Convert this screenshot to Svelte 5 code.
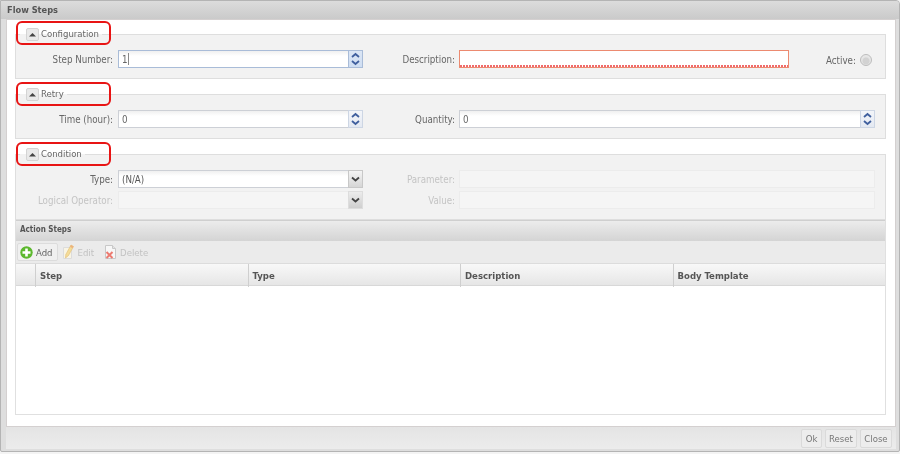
<script>
  const columns = ['Step', 'Type', 'Description', 'Body Template'];
</script>

{#snippet chevrons()}
  <span class="spin">
    <svg width="15" height="18" viewBox="0 0 15 18" aria-hidden="true">
      <path d="M4 7 7.500 4 11 7" fill="none" stroke="#3f5f9e" stroke-width="1.800"/>
      <path d="M4 11 7.500 14 11 11" fill="none" stroke="#3f5f9e" stroke-width="1.800"/>
    </svg>
  </span>
{/snippet}

{#snippet comboArrow(off)}
  <span class="arrow" class:off>
    <svg width="15" height="18" viewBox="0 0 15 18" aria-hidden="true">
      <path d="M4 7.500 7.500 10.500 11 7.500" fill="none" stroke="#444" stroke-width="1.800"/>
    </svg>
  </span>
{/snippet}

{#snippet legendBtn()}
  <span class="tool">
    <svg width="9" height="7" viewBox="0 0 9 7" aria-hidden="true"><path d="M1 5.500 4.500 2 8 5.500Z" fill="#444"/></svg>
  </span>
{/snippet}

<div class="win">
  <header class="title">Flow Steps</header>

  <main class="body">
    <fieldset class="fs">
      <legend>{@render legendBtn()}<span class="ltext">Configuration</span></legend>
      <div class="row">
        <span class="lab first">Step Number:</span>
        <div class="field num focus"><span class="val">1<i class="caret"></i></span>{@render chevrons()}</div>
        <span class="lab second">Description:</span>
        <div class="field desc"></div>
        <span class="lab active">Active:</span>
        <span class="radio"></span>
      </div>
    </fieldset>

    <fieldset class="fs">
      <legend>{@render legendBtn()}<span class="ltext">Retry</span></legend>
      <div class="row">
        <span class="lab first">Time (hour):</span>
        <div class="field num"><span class="val">0</span>{@render chevrons()}</div>
        <span class="lab second">Quantity:</span>
        <div class="field grow"><span class="val">0</span>{@render chevrons()}</div>
      </div>
    </fieldset>

    <fieldset class="fs cond">
      <legend>{@render legendBtn()}<span class="ltext">Condition</span></legend>
      <div class="row">
        <span class="lab first">Type:</span>
        <div class="field num"><span class="val dark">(N/A)</span>{@render comboArrow(false)}</div>
        <span class="lab second dis">Parameter:</span>
        <div class="field grow disabled"></div>
      </div>
      <div class="row">
        <span class="lab first dis">Logical Operator:</span>
        <div class="field num disabled">{@render comboArrow(true)}</div>
        <span class="lab second dis">Value:</span>
        <div class="field grow disabled"></div>
      </div>
    </fieldset>

    <section class="panel">
      <div class="phead">Action Steps</div>
      <div class="bar">
        <span class="btn on">
          <svg width="13" height="13" viewBox="0 0 13 13" aria-hidden="true">
            <circle cx="6.500" cy="6.500" r="6.200" fill="#5cb82e"/>
            <path d="M6.500 2.500v8M2.500 6.500h8" stroke="#fff" stroke-width="2.600"/>
          </svg>
          Add
        </span>
        <span class="btn edit">
          <svg width="13" height="16" viewBox="0 0 13 16" aria-hidden="true">
            <path d="M1.500 3.500h8v11h-8z" fill="#f8f4e4" stroke="#dcdcdc"/>
            <path d="M9 1l2.500 1.500-5 9-3 2.500.3-3.500z" fill="#f4dc98" stroke="#e2bd74" stroke-width=".6"/>
            <path d="M9 1l2.500 1.500-1 1.800-2.500-1.500z" fill="#edb27e"/>
          </svg>
          Edit
        </span>
        <span class="btn del">
          <svg width="13" height="16" viewBox="0 0 13 16" aria-hidden="true">
            <path d="M1.500 1.500h7l3 3v10h-10z" fill="#f7f7f7" stroke="#c8c8c8"/>
            <path d="M8.500 1.500v3h3" fill="#e4e4e4" stroke="#c8c8c8"/>
            <path d="M2.500 8l6 6M8.500 8l-6 6" stroke="#ec7a70" stroke-width="2"/>
          </svg>
          Delete
        </span>
      </div>
      <div class="ghead">
        <div class="gcell lead"></div>
        {#each columns as c}
          <div class="gcell">{c}</div>
        {/each}
      </div>
      <div class="gbody"></div>
    </section>

    <span class="mark m1"></span>
    <span class="mark m2"></span>
    <span class="mark m3"></span>
  </main>

  <footer class="foot">
    <span class="fbtn ok">Ok</span>
    <span class="fbtn">Reset</span>
    <span class="fbtn">Close</span>
  </footer>
</div>

<style>
  :global(body) { margin: 0; background: #f4f4f4; }
  .win {
    width: 900px; height: 452px; box-sizing: border-box;
    display: flex; flex-direction: column;
    background: #dedede;
    border: 1px solid #b4b4b4; border-radius: 0 4px 2px 2px;
    padding: 0 3px 2px 5px;
    font: 9.700px "DejaVu Sans", sans-serif;
    font-stretch: condensed;
    color: #666;
    filter: blur(0.35px);
    overflow: hidden;
  }
  .title {
    height: 18px; margin: 0 -3px 0 -5px; padding-left: 6px; flex: none;
    background: linear-gradient(#dcdcdc, #cacaca);
    font-size: 9.200px; font-weight: bold; color: #555; line-height: 17px;
  }
  .body {
    position: relative; flex: none; height: 408px; box-sizing: border-box;
    background: #fff; border: 1px solid #d4d0d0;
    padding: 0 9px 0 8px;
  }
  .fs {
    margin: 7px 0 0; padding: 9px 10px 10px 0; min-width: 0;
    border: 1px solid #dedede; background: #f2f2f2;
  }
  .fs + .fs { margin-top: 8px; }
  .fs legend {
    margin-left: 4px; padding: 0 3px 0 6px; height: 14px;
    display: flex; align-items: center;
    font-size: 9.500px; color: #666;
  }
  .ltext { margin-bottom: 2px; }
  .tool {
    width: 13px; height: 13px; box-sizing: border-box;
    display: inline-flex; align-items: center; justify-content: center;
    background: #e9e9e9; border: 1px solid #d4d4d4; border-radius: 2px;
    margin-right: 2px;
  }
  .row { display: flex; align-items: center; height: 18px; }
  .row + .row { margin-top: 3px; }
  .lab { flex: none; text-align: right; white-space: nowrap; }
  .first { width: 97px; margin-right: 5px; }
  .second { width: 92px; margin-right: 4px; }
  .dis { color: #c4c4c4; }
  .field {
    flex: none; height: 18px; box-sizing: border-box;
    display: flex; align-items: center; justify-content: space-between;
    background: linear-gradient(#f0f0f0, #fff 5px);
    border: 1px solid #cdd0d6;
  }
  .num { width: 245px; }
  .grow { flex: 1; min-width: 0; }
  .focus { border-color: #a9bcd8; }
  .desc {
    width: 330px; background: #fff; border-color: #ec8a70;
    position: relative;
  }
  .desc::after {
    content: ""; position: absolute; left: 0; right: 0; bottom: 0; height: 2px;
    background: repeating-linear-gradient(90deg, #f06a6a 0 2px, #fff 2px 3px);
  }
  .disabled { background: #f5f5f5; border-color: #ececec; justify-content: flex-end; }
  .val { padding-left: 3px; color: #666; display: inline-flex; align-items: center; }
  .val.dark { color: #555; }
  .caret { width: 1px; height: 12px; background: #888; margin-left: 0.500px; }
  .spin, .arrow {
    flex: none; width: 15px; height: 18px; margin: -1px -1px -1px 0;
    box-sizing: border-box; border: 1px solid #cdd6e4;
    background: linear-gradient(#f3f5f9, #e4e9f2);
    display: block; overflow: hidden;
  }
  .focus .spin { background: linear-gradient(#dbe6f5, #cfdef2); border-color: #a9bcd8; }
  .spin svg, .arrow svg { display: block; margin: -1px; }
  .arrow {
    border-color: #c8c8c8;
    background: linear-gradient(#f4f4f4, #d6d6d6);
  }
  .arrow.off { background: linear-gradient(#ececec, #cfcfcf); border-color: #ddd; }
  .active { width: auto; margin-left: 37px; margin-right: 4px; margin-top: 2px; }
  .radio {
    width: 12px; height: 12px; border-radius: 50%; flex: none; box-sizing: border-box;
    margin-top: 2px;
    background: radial-gradient(circle at 50% 60%, #d2d2d2 0 3px, #e4e4e4 4px, #f0f0f0);
    border: 1px solid #bcbcbc;
  }
  .panel { border: 1px solid #e0e0e0; border-top: 0; }
  .phead {
    height: 21px; box-sizing: border-box; padding-left: 4px; line-height: 18px;
    border-top: 1px solid #cfcfcf;
    background: linear-gradient(#ececec, #d4d4d4);
    font-size: 8px; font-weight: bold; color: #555;
  }
  .bar {
    height: 22px; padding-left: 1px; box-sizing: border-box;
    display: flex; align-items: center;
    background: #ebebeb; color: #c2c2c2; font-size: 9.500px;
  }
  .btn {
    display: inline-flex; align-items: center; gap: 3px;
    height: 18px; padding: 0 4px 0 2px; box-sizing: border-box;
    border: 1px solid transparent; border-radius: 2px;
  }
  .btn.on { color: #666; border-color: #dcdcdc; background: #f0f0f0; }
  .edit { margin-left: 1px; }
  .del { margin-left: 2px; }
  .ghead {
    display: grid; grid-template-columns: 19px repeat(4, 1fr);
    height: 23px; box-sizing: border-box;
    background: linear-gradient(#f8f8f8, #e6e6e6);
    border-top: 1px solid #dcdcdc; border-bottom: 1px solid #d8d8d8;
  }
  .gcell {
    padding-left: 4px; line-height: 23px;
    border-left: 1px solid #cfcfcf;
    font-weight: bold; font-size: 9.500px; color: #555;
  }
  .lead { border-left: 0; padding: 0; }
  .gbody { height: 128px; background: #fff; }
  .foot {
    flex: 1; display: flex; justify-content: flex-end; align-items: flex-start;
    gap: 3px; padding: 2px 4px 0 0;
    background: linear-gradient(#e4e4e4, #ececec);
  }
  .fbtn {
    width: 32px; text-align: center; height: 19px; box-sizing: border-box; line-height: 17px;
    border: 1px solid #dadada; border-radius: 2px; background: #ededed;
    color: #777; font-size: 9.500px;
  }
  .ok { width: 21px; }
  .mark {
    position: absolute; left: 9px; width: 95px; height: 24px; box-sizing: border-box;
    border: 2px solid #e81414; border-radius: 6px; pointer-events: none;
  }
  .m1 { top: 1px; }
  .m2 { top: 62px; }
  .m3 { top: 122px; }
</style>
